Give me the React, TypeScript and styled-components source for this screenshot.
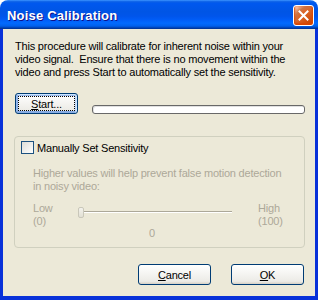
import React from "react";
import styled, { createGlobalStyle } from "styled-components";

const GlobalStyle = createGlobalStyle`
  html, body {
    margin: 0;
    padding: 0;
    background: #ffffff;
  }
  body {
    font-family: Tahoma, "Liberation Sans", Arial, sans-serif;
    font-size: 11px;
    letter-spacing: -0.2px;
    color: #000;
  }
`;

const Window = styled.div`
  width: 318px;
  height: 300px;
  display: flex;
  flex-direction: column;
  border-radius: 8px 8px 0 0;
  overflow: hidden;
`;

const TitleBar = styled.div`
  height: 29px;
  flex: none;
  display: flex;
  align-items: center;
  justify-content: space-between;
  padding: 2px 4px 0 7px;
  box-sizing: border-box;
  background: linear-gradient(
    180deg,
    #3d95ff,
    #0a5fe7 6%,
    #0058ee 12%,
    #0055e5 40%,
    #0055eb 56%,
    #005bf5 66%,
    #026afe 80%,
    #0062ef 88%,
    #0052d6 93%,
    #0040ab 96%,
    #003092
  );
`;

const Title = styled.span`
  font-family: "Trebuchet MS", "Liberation Sans", Arial, sans-serif;
  font-weight: bold;
  font-size: 13px;
  letter-spacing: 0.2px;
  color: #fff;
  text-shadow: 1px 1px #0f1089;
`;

const CloseButton = styled.div`
  width: 21px;
  height: 21px;
  box-sizing: border-box;
  border: 1px solid #fff;
  border-radius: 3px;
  display: flex;
  align-items: center;
  justify-content: center;
  background: radial-gradient(
    circle at 90% 90%,
    #cc4600 0%,
    #dc6527 55%,
    #cd7546 70%,
    #ffccb2 90%,
    #fff 100%
  );
  box-shadow: inset 0 -1px 2px 1px #da4600;
`;

const Frame = styled.div`
  flex: 1;
  display: flex;
  border-left: 3px solid #0831d9;
  border-right: 3px solid #0831d9;
  border-bottom: 4px solid #0831d9;
  box-shadow: inset 1px 0 #166aee, inset -1px 0 #166aee, inset 0 -1px #166aee;
`;

const Client = styled.div`
  flex: 1;
  background: #ece9d8;
  display: flex;
  flex-direction: column;
  padding: 11px 10px 0 12px;
`;

const Text = styled.p<{ $disabled?: boolean }>`
  margin: 0;
  line-height: 13px;
  color: ${(p) => (p.$disabled ? "#aca899" : "#000")};
`;

const ActionRow = styled.div`
  display: flex;
  align-items: flex-end;
  margin-top: 14px;
`;

const Button = styled.div<{ $width: number; $focused?: boolean }>`
  position: relative;
  width: ${(p) => p.$width}px;
  height: 21px;
  box-sizing: border-box;
  border: 1px solid #003c74;
  border-radius: 3px;
  background: linear-gradient(180deg, #fff, #ecebe6 86%, #d6d0c5);
  display: flex;
  align-items: center;
  justify-content: center;
  box-shadow: ${(p) =>
    p.$focused
      ? "inset -1px 1px #cee7ff, inset 1px 2px #98b8ea, inset -2px 2px #bcd4f6, inset 1px -1px #89ade4, inset 2px -2px #89ade4"
      : "none"};
  &::after {
    content: "";
    display: ${(p) => (p.$focused ? "block" : "none")};
    position: absolute;
    inset: 2px;
    border: 1px dotted #000;
  }
`;

const Mnemonic = styled.span`
  text-decoration: underline;
`;

const ProgressBar = styled.div`
  flex: 1;
  margin-left: 14px;
  height: 9px;
  box-sizing: border-box;
  border: 1px solid #686868;
  border-radius: 3px;
  background: #fff;
  box-shadow: inset 1px 1px #e0e0e0;
`;

const GroupBox = styled.div`
  margin-top: 22px;
  margin-left: -1px;
  height: 112px;
  box-sizing: border-box;
  border: 1px solid #d0d0bf;
  border-radius: 4px;
  padding: 4px 0 0 6px;
  display: flex;
  flex-direction: column;
`;

const CheckRow = styled.label`
  display: flex;
  align-items: center;
  gap: 3px;
  height: 13px;
`;

const CheckBox = styled.span`
  width: 13px;
  height: 13px;
  box-sizing: border-box;
  border: 1px solid #1c5180;
  background: linear-gradient(135deg, #dcdcd7, #fff);
`;

const GroupInner = styled.div`
  padding: 0 20px 0 12px;
  display: flex;
  flex-direction: column;
`;

const HelpText = styled(Text)`
  margin-top: 13px;
`;

const SliderRow = styled.div`
  display: flex;
  align-items: flex-start;
  margin-top: 9px;
`;

const RangeLabel = styled.div<{ $width?: number }>`
  width: ${(p) => (p.$width ? `${p.$width}px` : "auto")};
  line-height: 13px;
  color: #aca899;
`;

const Track = styled.div`
  position: relative;
  width: 153px;
  height: 11px;
  margin-top: 5px;
  margin-right: 26px;
  &::before {
    content: "";
    position: absolute;
    left: 0;
    right: 0;
    top: 4px;
    height: 1px;
    background: #aca899;
    box-shadow: 0 1px #fff;
  }
`;

const Thumb = styled.span`
  position: absolute;
  left: -1px;
  top: 0;
  width: 6px;
  height: 11px;
  box-sizing: border-box;
  border: 1px solid #c9c7ba;
  border-radius: 2px;
  background: linear-gradient(180deg, #f3f2ec, #e2e0d4);
`;

const ValueLabel = styled.div`
  margin-top: -1px;
  margin-left: 116px;
  line-height: 13px;
  color: #aca899;
`;

const ButtonRow = styled.div`
  display: flex;
  justify-content: flex-end;
  gap: 20px;
  margin-top: 16px;
  margin-right: 1px;
`;

const CloseIcon = () => (
  <svg width="11" height="11" viewBox="0 0 11 11">
    <path d="M1.5 1.5 L9.5 9.5 M9.5 1.5 L1.5 9.5" stroke="#fff" strokeWidth="2" strokeLinecap="square" />
  </svg>
);

export default function App() {
  return (
    <>
      <GlobalStyle />
      <Window>
        <TitleBar>
          <Title>Noise Calibration</Title>
          <CloseButton>
            <CloseIcon />
          </CloseButton>
        </TitleBar>
        <Frame>
          <Client>
            <Text>
              This procedure will calibrate for inherent noise within your video signal.&nbsp; Ensure
              that there is no movement within the video and press Start to automatically set the
              sensitivity.
            </Text>
            <ActionRow>
              <Button $width={63} $focused>
                <span>
                  <Mnemonic>S</Mnemonic>tart...
                </span>
              </Button>
              <ProgressBar />
            </ActionRow>
            <GroupBox>
              <CheckRow>
                <CheckBox />
                <span>Manually Set Sensitivity</span>
              </CheckRow>
              <GroupInner>
                <HelpText $disabled>
                  Higher values will help prevent false motion detection in noisy video:
                </HelpText>
                <SliderRow>
                  <RangeLabel $width={46}>
                    Low
                    <br />
                    (0)
                  </RangeLabel>
                  <Track>
                    <Thumb />
                  </Track>
                  <RangeLabel>
                    High
                    <br />
                    (100)
                  </RangeLabel>
                </SliderRow>
                <ValueLabel>0</ValueLabel>
              </GroupInner>
            </GroupBox>
            <ButtonRow>
              <Button $width={73}>
                <span>
                  <Mnemonic>C</Mnemonic>ancel
                </span>
              </Button>
              <Button $width={73}>
                <span>
                  <Mnemonic>O</Mnemonic>K
                </span>
              </Button>
            </ButtonRow>
          </Client>
        </Frame>
      </Window>
    </>
  );
}
